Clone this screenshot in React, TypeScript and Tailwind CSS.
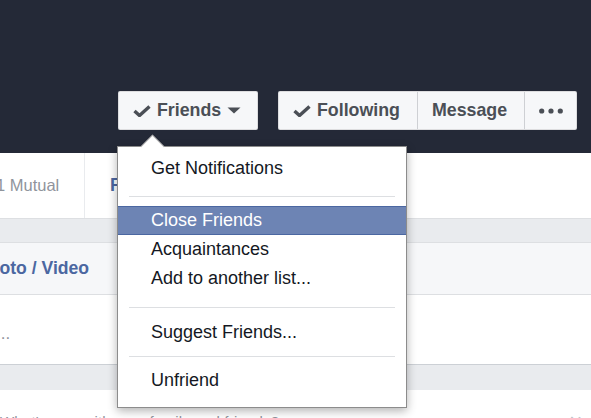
import React from "react";

function CheckMark() {
  return (
    <svg width="18" height="12" viewBox="0 0 18 12" className="shrink-0">
      <polyline points="1.5,6 6.5,10.5 16.5,1.5" fill="none" stroke="#4b4f56" strokeWidth="3.4" strokeLinejoin="miter" />
    </svg>
  );
}

function Caret() {
  return (
    <svg width="14" height="7" viewBox="0 0 14 7" className="shrink-0">
      <polygon points="0.5,0.5 13.5,0.5 7,6.5" fill="#4b4f56" />
    </svg>
  );
}

function Dots() {
  return (
    <svg width="24" height="6" viewBox="0 0 24 6">
      <circle cx="2.7" cy="3" r="2.6" fill="#4b4f56" />
      <circle cx="12" cy="3" r="2.6" fill="#4b4f56" />
      <circle cx="21.3" cy="3" r="2.6" fill="#4b4f56" />
    </svg>
  );
}

const item = "h-[29px] flex items-center pl-[33px] text-[18px] text-[#141823]";

export default function App() {
  return (
    <div className="relative w-[591px] h-[418px] overflow-hidden bg-white font-['Liberation_Sans',Arial,sans-serif]">
      {/* Cover bottom / action buttons */}
      <div className="h-[153px] bg-[#242937] flex justify-end items-start pt-[91px] pr-[14px] gap-[20px]">
        <button className="h-[39px] w-[140px] rounded-[2px] bg-[#f6f7f9] border border-black/10 flex items-center pl-[14px] text-[17.8px] font-bold text-[#4b4f56]">
          <CheckMark />
          <span className="ml-[6px] leading-none">Friends</span>
          <span className="ml-[6px]">
            <Caret />
          </span>
        </button>
        <div className="h-[39px] w-[299px] rounded-[2px] bg-[#f6f7f9] border border-black/10 flex text-[17.8px] font-bold text-[#4b4f56]">
          <div className="w-[138px] flex items-center pl-[14px]">
            <CheckMark />
            <span className="ml-[6px] leading-none">Following</span>
          </div>
          <div className="w-[107px] border-l border-[#ced0d4] flex items-center pl-[14px]">
            <span className="leading-none">Message</span>
          </div>
          <div className="flex-1 border-l border-[#ced0d4] flex items-center justify-center">
            <Dots />
          </div>
        </div>
      </div>

      {/* Tabs row */}
      <div className="h-[65px] flex items-center">
        <div className="w-[85px] h-full flex items-center border-r border-[#e9ebee]">
          <span className="ml-[-4px] text-[16.5px] text-[#90949c]">1 Mutual</span>
        </div>
        <span className="ml-[25px] text-[18px] font-bold text-[#4b67a1]">Friends</span>
      </div>
      <div className="h-[25px] border-y border-[#dddfe2] bg-[#e9ebee]" />

      {/* Composer */}
      <div className="h-[52px] bg-[#f6f7f9] border-b border-[#dddfe2] flex items-center">
        <span className="ml-[-23px] text-[17.6px] font-bold text-[#4b67a1] whitespace-nowrap">Photo / Video</span>
      </div>
      <div className="h-[69px] pt-[30px]">
        <span className="block ml-[-4px] text-[17px] leading-[18px] text-[#90949c]">...</span>
      </div>
      <div className="h-[26px] border-t border-[#ccd0d5] bg-[#e9ebee]" />
      <div className="flex justify-between items-start pt-[21px] pr-[9px]">
        <span className="text-[15px] text-[#90949c] tracking-[0.2px] whitespace-nowrap">What's new with your family and friends?</span>
        <span className="text-[22px] leading-none text-[#bec2c9]">×</span>
      </div>

      {/* Dropdown menu */}
      <div className="absolute left-[117px] top-[146px] w-[290px] bg-white border border-black/45 shadow-[0_3px_9px_rgba(0,0,0,0.3)] pt-[7px] pb-[12px]">
        <div className="absolute left-[26px] top-[-9px] w-[17px] h-[17px] rotate-45 bg-white border-l border-t border-black/30" />
        <div className="relative">
          <div className={item}>Get Notifications</div>
          <div className="pt-[13px] pb-[9px] px-[11px]">
            <div className="h-px bg-[#dddfe2]" />
          </div>
          <div className="h-[29px] flex items-center pl-[33px] text-[18px] text-white bg-[#6d84b4] border-y border-[#4b67a1]">
            Close Friends
          </div>
          <div className={item}>Acquaintances</div>
          <div className={item}>Add to another list...</div>
          <div className="pt-[14px] pb-[10px] px-[11px]">
            <div className="h-px bg-[#dddfe2]" />
          </div>
          <div className={item}>Suggest Friends...</div>
          <div className="pt-[9px] pb-[9px] px-[11px]">
            <div className="h-px bg-[#dddfe2]" />
          </div>
          <div className={item}>Unfriend</div>
        </div>
      </div>
    </div>
  );
}
